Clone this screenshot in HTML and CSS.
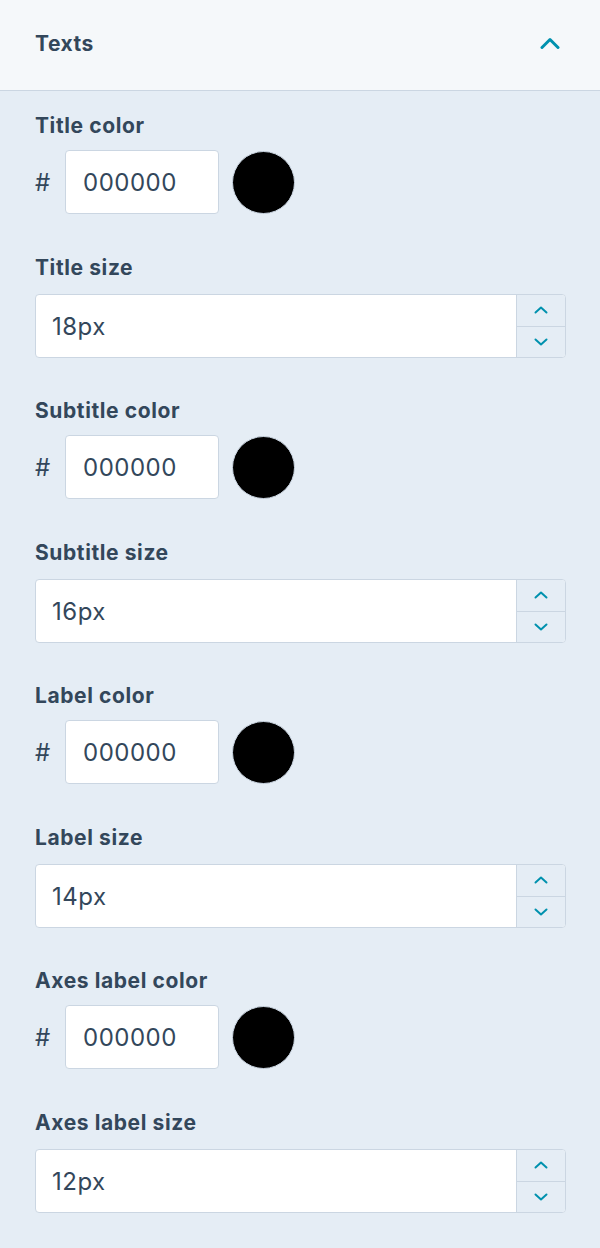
FILE: index.html
```html
<!DOCTYPE html>
<html lang="en">
<head>
<meta charset="utf-8">
<link rel="stylesheet" href="styles.css">
</head>
<body>
<div class="panel">
  <div class="panel-header">
    <span class="panel-title">Texts</span>
    <svg class="collapse-icon" width="20" height="12" viewBox="0 0 20 12"><path d="M2 10.5 L10 2.5 L18 10.5" fill="none" stroke="#0091ae" stroke-width="3" stroke-linecap="round" stroke-linejoin="round"/></svg>
  </div>
  <div class="panel-body">
    <div class="field field-color">
      <label class="field-label">Title color</label>
      <div class="color-row">
        <span class="hash">#</span>
        <div class="text-input hex-input">000000</div>
        <div class="swatch"></div>
      </div>
    </div>
    <div class="field field-size">
      <label class="field-label">Title size</label>
      <div class="number-input">
        <div class="number-value">18px</div>
        <div class="stepper">
          <div class="step"><svg width="14" height="8" viewBox="0 0 14 8"><path d="M1.5 6.5 L7 1.5 L12.5 6.5" fill="none" stroke="#0091ae" stroke-width="2" stroke-linecap="round" stroke-linejoin="round"/></svg></div>
          <div class="step"><svg width="14" height="8" viewBox="0 0 14 8"><path d="M1.5 1.5 L7 6.5 L12.5 1.5" fill="none" stroke="#0091ae" stroke-width="2" stroke-linecap="round" stroke-linejoin="round"/></svg></div>
        </div>
      </div>
    </div>
    <div class="field field-color">
      <label class="field-label">Subtitle color</label>
      <div class="color-row">
        <span class="hash">#</span>
        <div class="text-input hex-input">000000</div>
        <div class="swatch"></div>
      </div>
    </div>
    <div class="field field-size">
      <label class="field-label">Subtitle size</label>
      <div class="number-input">
        <div class="number-value">16px</div>
        <div class="stepper">
          <div class="step"><svg width="14" height="8" viewBox="0 0 14 8"><path d="M1.5 6.5 L7 1.5 L12.5 6.5" fill="none" stroke="#0091ae" stroke-width="2" stroke-linecap="round" stroke-linejoin="round"/></svg></div>
          <div class="step"><svg width="14" height="8" viewBox="0 0 14 8"><path d="M1.5 1.5 L7 6.5 L12.5 1.5" fill="none" stroke="#0091ae" stroke-width="2" stroke-linecap="round" stroke-linejoin="round"/></svg></div>
        </div>
      </div>
    </div>
    <div class="field field-color">
      <label class="field-label">Label color</label>
      <div class="color-row">
        <span class="hash">#</span>
        <div class="text-input hex-input">000000</div>
        <div class="swatch"></div>
      </div>
    </div>
    <div class="field field-size">
      <label class="field-label">Label size</label>
      <div class="number-input">
        <div class="number-value">14px</div>
        <div class="stepper">
          <div class="step"><svg width="14" height="8" viewBox="0 0 14 8"><path d="M1.5 6.5 L7 1.5 L12.5 6.5" fill="none" stroke="#0091ae" stroke-width="2" stroke-linecap="round" stroke-linejoin="round"/></svg></div>
          <div class="step"><svg width="14" height="8" viewBox="0 0 14 8"><path d="M1.5 1.5 L7 6.5 L12.5 1.5" fill="none" stroke="#0091ae" stroke-width="2" stroke-linecap="round" stroke-linejoin="round"/></svg></div>
        </div>
      </div>
    </div>
    <div class="field field-color">
      <label class="field-label">Axes label color</label>
      <div class="color-row">
        <span class="hash">#</span>
        <div class="text-input hex-input">000000</div>
        <div class="swatch"></div>
      </div>
    </div>
    <div class="field field-size">
      <label class="field-label">Axes label size</label>
      <div class="number-input">
        <div class="number-value">12px</div>
        <div class="stepper">
          <div class="step"><svg width="14" height="8" viewBox="0 0 14 8"><path d="M1.5 6.5 L7 1.5 L12.5 6.5" fill="none" stroke="#0091ae" stroke-width="2" stroke-linecap="round" stroke-linejoin="round"/></svg></div>
          <div class="step"><svg width="14" height="8" viewBox="0 0 14 8"><path d="M1.5 1.5 L7 6.5 L12.5 1.5" fill="none" stroke="#0091ae" stroke-width="2" stroke-linecap="round" stroke-linejoin="round"/></svg></div>
        </div>
      </div>
    </div>
  </div>
</div>
</body>
</html>
```
FILE: styles.css
```css
* { box-sizing: border-box; }
html, body {
  margin: 0;
  padding: 0;
  background: #e5edf5;
  font-family: Inter, "Liberation Sans", sans-serif;
  color: #33475b;
}
.panel {
  width: 600px;
  min-height: 1248px;
  background: #e5edf5;
}
.panel-header {
  height: 91px;
  background: #f5f8fa;
  border-bottom: 1px solid #cbd6e2;
  display: flex;
  align-items: center;
  justify-content: space-between;
  padding: 0 40px 0 35px;
}
.panel-title {
  font-size: 21px;
  font-weight: 700;
  letter-spacing: 0.5px;
  line-height: 1;
  margin-top: -4px;
}
.collapse-icon {
  display: block;
  margin-top: -4px;
}
.panel-body {
  padding: 23px 34px 0 35px;
  display: flex;
  flex-direction: column;
}
.field {
  display: flex;
  flex-direction: column;
}
.field-color { padding-bottom: 42px; }
.field-size { padding-bottom: 41px; }
.field-label {
  font-size: 21px;
  font-weight: 700;
  letter-spacing: 0.6px;
  line-height: 24px;
  height: 24px;
}
.field-color .field-label { margin-bottom: 12px; }
.field-size .field-label { margin-bottom: 14px; }
.color-row {
  display: flex;
  align-items: center;
  height: 64px;
}
.hash {
  font-size: 24px;
  width: 30px;
  line-height: 1;
  margin-top: 2px;
}
.text-input {
  background: #fff;
  border: 1px solid #cbd6e2;
  border-radius: 4px;
}
.hex-input {
  width: 154px;
  height: 64px;
  padding-left: 17px;
  display: flex;
  align-items: center;
  font-size: 24px;
  letter-spacing: 0.5px;
}
.swatch {
  width: 63px;
  height: 63px;
  border-radius: 50%;
  background: #000;
  border: 1px solid #cbd6e2;
  margin-left: 13px;
}
.number-input {
  display: flex;
  height: 64px;
  background: #fff;
  border: 1px solid #cbd6e2;
  border-radius: 4px;
  overflow: hidden;
}
.number-value {
  flex: 1;
  display: flex;
  align-items: center;
  padding-left: 16px;
  font-size: 24px;
  letter-spacing: 0.5px;
}
.stepper {
  width: 49px;
  border-left: 1px solid #cbd6e2;
  background: #e5edf5;
  display: flex;
  flex-direction: column;
}
.step {
  flex: 1;
  display: flex;
  align-items: center;
  justify-content: center;
}
.step + .step { border-top: 1px solid #cbd6e2; }
.step svg { display: block; }
```
